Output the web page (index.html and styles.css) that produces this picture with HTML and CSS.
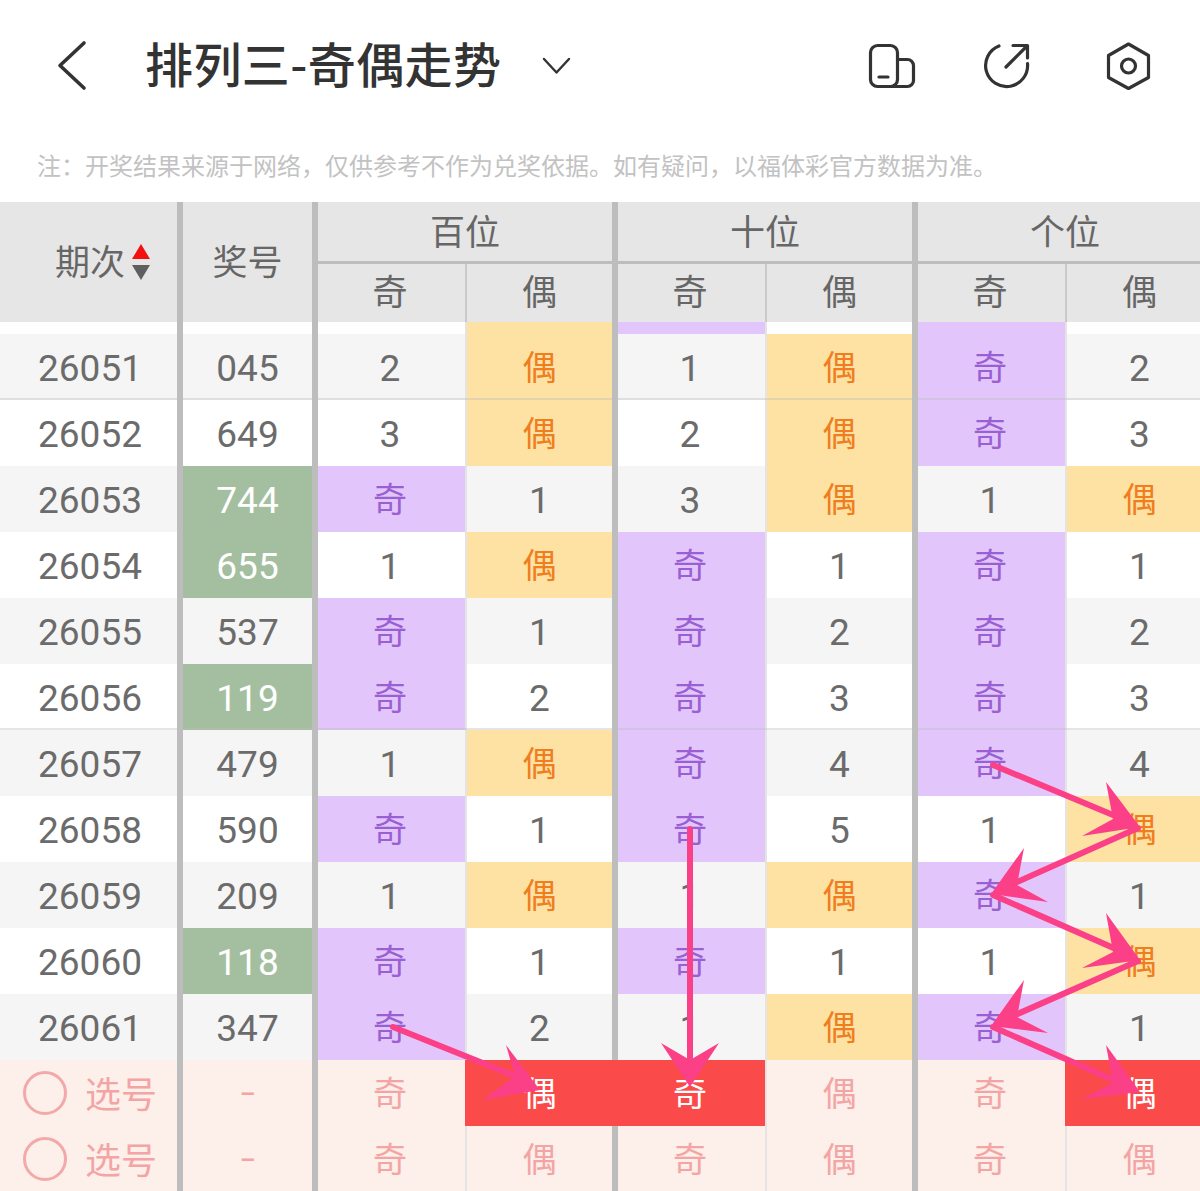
FILE: index.html
```html
<!DOCTYPE html>
<html lang="zh-CN">
<head>
<meta charset="utf-8">
<title>排列三-奇偶走势</title>
<link rel="stylesheet" href="styles.css">
</head>
<body>
<header class="topbar">
  <svg class="back" width="32" height="52" viewBox="0 0 32 52"><path d="M28 3 L4 25.5 L28 48"/></svg>
  <h1 class="title">排列三-奇偶走势</h1>
  <svg class="caret" width="30" height="18" viewBox="0 0 30 18"><path d="M2 2 L14.5 15.5 L27 2"/></svg>
  <svg class="ico ico-first" width="48" height="48" viewBox="0 0 48 48"><rect x="2.5" y="3.5" width="27" height="41" rx="7"/><path d="M29.5 17.5 H39.5 a6 6 0 0 1 6 6 V38.5 a6 6 0 0 1 -6 6 H23"/><path d="M11 35 H20"/></svg>
  <svg class="ico ico-second" width="48" height="48" viewBox="0 0 48 48"><path d="M16 4 A21 21 0 1 0 44.5 21.5"/><path d="M30 3.5 H44.5 V16"/><path d="M23 25 L43.5 4.5"/></svg>
  <svg class="ico ico-third" width="48" height="48" viewBox="0 0 48 48"><path d="M24.5 2 L44.5 13.5 V35.5 L24.5 46.5 L4.5 35.5 V13.5 Z"/><circle cx="24.5" cy="24" r="7"/></svg>
</header>
<p class="note">注&#xFF1A;开奖结果来源于网络&#xFF0C;仅供参考不作为兑奖依据。如有疑问&#xFF0C;以福体彩官方数据为准。</p>

<section class="table">
  <div class="thead">
    <div class="th-main th-period"><span class="th-label">期次</span><svg class="sort" width="20" height="38" viewBox="0 0 20 38"><polygon class="sort-up" points="10,0 19,15 1,15"/><polygon class="sort-down" points="1,21 19,21 10,36"/></svg></div>
    <div class="th-main"><span class="th-label">奖号</span></div>
    <div class="th-group"><div class="th-name">百位</div><div class="th-sub"><span>奇</span><span class="th-even">偶</span></div></div>
    <div class="th-group"><div class="th-name">十位</div><div class="th-sub"><span>奇</span><span class="th-even">偶</span></div></div>
    <div class="th-group"><div class="th-name">个位</div><div class="th-sub"><span>奇</span><span class="th-even">偶</span></div></div>
  </div>

  <div class="row row-stub">
    <div class="c c-main"></div><div class="c c-main"></div>
    <div class="c"></div><div class="c even yel"></div>
    <div class="c pur"></div><div class="c even"></div>
    <div class="c pur"></div><div class="c even"></div>
  </div>

  <div class="row alt sep"><div class="c c-main c-period">26051</div><div class="c c-main">045</div><div class="c">2</div><div class="c even yel">偶</div><div class="c">1</div><div class="c even yel">偶</div><div class="c pur">奇</div><div class="c even">2</div></div>
  <div class="row"><div class="c c-main c-period">26052</div><div class="c c-main">649</div><div class="c">3</div><div class="c even yel">偶</div><div class="c">2</div><div class="c even yel">偶</div><div class="c pur">奇</div><div class="c even">3</div></div>
  <div class="row alt"><div class="c c-main c-period">26053</div><div class="c c-main grn">744</div><div class="c pur">奇</div><div class="c even">1</div><div class="c">3</div><div class="c even yel">偶</div><div class="c">1</div><div class="c even yel">偶</div></div>
  <div class="row"><div class="c c-main c-period">26054</div><div class="c c-main grn">655</div><div class="c">1</div><div class="c even yel">偶</div><div class="c pur">奇</div><div class="c even">1</div><div class="c pur">奇</div><div class="c even">1</div></div>
  <div class="row alt"><div class="c c-main c-period">26055</div><div class="c c-main">537</div><div class="c pur">奇</div><div class="c even">1</div><div class="c pur">奇</div><div class="c even">2</div><div class="c pur">奇</div><div class="c even">2</div></div>
  <div class="row sep"><div class="c c-main c-period">26056</div><div class="c c-main grn">119</div><div class="c pur">奇</div><div class="c even">2</div><div class="c pur">奇</div><div class="c even">3</div><div class="c pur">奇</div><div class="c even">3</div></div>
  <div class="row alt"><div class="c c-main c-period">26057</div><div class="c c-main">479</div><div class="c">1</div><div class="c even yel">偶</div><div class="c pur">奇</div><div class="c even">4</div><div class="c pur">奇</div><div class="c even">4</div></div>
  <div class="row"><div class="c c-main c-period">26058</div><div class="c c-main">590</div><div class="c pur">奇</div><div class="c even">1</div><div class="c pur">奇</div><div class="c even">5</div><div class="c">1</div><div class="c even yel">偶</div></div>
  <div class="row alt"><div class="c c-main c-period">26059</div><div class="c c-main">209</div><div class="c">1</div><div class="c even yel">偶</div><div class="c">1</div><div class="c even yel">偶</div><div class="c pur">奇</div><div class="c even">1</div></div>
  <div class="row"><div class="c c-main c-period">26060</div><div class="c c-main grn">118</div><div class="c pur">奇</div><div class="c even">1</div><div class="c pur">奇</div><div class="c even">1</div><div class="c">1</div><div class="c even yel">偶</div></div>
  <div class="row alt"><div class="c c-main c-period">26061</div><div class="c c-main">347</div><div class="c pur">奇</div><div class="c even">2</div><div class="c">1</div><div class="c even yel">偶</div><div class="c pur">奇</div><div class="c even">1</div></div>

  <div class="row pick"><div class="c c-main c-pick"><i class="radio"></i><span class="pick-label">选号</span></div><div class="c c-main"><span class="dash">-</span></div><div class="c">奇</div><div class="c even red">偶</div><div class="c red">奇</div><div class="c even">偶</div><div class="c">奇</div><div class="c even red">偶</div></div>
  <div class="row pick"><div class="c c-main c-pick"><i class="radio"></i><span class="pick-label">选号</span></div><div class="c c-main"><span class="dash">-</span></div><div class="c">奇</div><div class="c even">偶</div><div class="c">奇</div><div class="c even">偶</div><div class="c">奇</div><div class="c even">偶</div></div>
</section>

<svg class="arrows" width="1200" height="1191" viewBox="0 0 1200 1191">
  <g class="arrow"><path d="M993 765 L1125 820"/><polygon points="1140,827 1106,782 1113,819 1082,836"/></g>
  <g class="arrow"><path d="M1138 828 L1006 887"/><polygon points="991,894 1024,848 1017,885 1048,902"/></g>
  <g class="arrow"><path d="M993 895 L1125 953"/><polygon points="1140,960 1106,913 1113,952 1082,968"/></g>
  <g class="arrow"><path d="M1138 961 L1006 1019"/><polygon points="991,1026 1024,980 1017,1017 1048,1033"/></g>
  <g class="arrow"><path d="M993 1027 L1125 1085"/><polygon points="1140,1092 1106,1045 1113,1083 1082,1099"/></g>
  <g class="arrow"><path d="M393 1027 L525 1080"/><polygon points="540,1090 506,1045 515,1076 483,1100"/></g>
  <g class="arrow"><path d="M690 829 V1065"/><polygon points="690,1087 661,1043 690,1060 719,1043"/></g>
</svg>
</body>
</html>
```

FILE: styles.css
```css
* { box-sizing: border-box; }
html, body { margin: 0; padding: 0; height: 1191px; overflow: hidden; background: #fff; }
body {
  position: relative;
  font-family: Roboto, "Noto Sans CJK SC", sans-serif;
  color: #666;
}

.topbar {
  height: 132px;
  display: flex;
  align-items: center;
  padding: 0 48px 0 56px;
}
.topbar svg { fill: none; stroke: #333; stroke-linecap: round; stroke-linejoin: round; flex: none; }
.back { stroke-width: 3.6; }
.title {
  margin: 0 0 8px 57px;
  font: 500 48px/1 "Noto Sans CJK SC", sans-serif;
  letter-spacing: 0.4px;
  color: #333;
  white-space: nowrap;
}
.caret { stroke-width: 2.4; margin-left: 41px; }
.ico { stroke-width: 3.2; }
.ico-first { margin-left: auto; }
.ico-second { margin-left: 67px; }
.ico-third { margin-left: 73px; }

.note {
  margin: 0;
  height: 70px;
  padding-left: 37px;
  font: 400 24px/66px "Noto Sans CJK SC", sans-serif;
  color: #c2c2c2;
  white-space: nowrap;
}

.table { width: 1218px; }

.thead {
  display: grid;
  grid-template-columns: 183px 135px 300px 300px 300px;
  height: 120px;
  background: #e6e6e6;
  font: 400 35px "Noto Sans CJK SC", sans-serif;
}
.th-main {
  display: flex;
  align-items: center;
  justify-content: center;
  border-right: 6px solid #bdbdbd;
}
.th-label { padding-bottom: 6px; }
.th-period { padding-left: 29px; }
.sort { margin-left: 6px; }
.sort-up { fill: #f21010; }
.sort-down { fill: #5f5f5f; }
.th-group { border-right: 6px solid #bdbdbd; display: flex; flex-direction: column; }
.th-name {
  height: 62px;
  padding-bottom: 4px;
  border-bottom: 3px solid #bdbdbd;
  display: flex;
  align-items: center;
  justify-content: center;
}
.th-sub { flex: 1; display: grid; grid-template-columns: 147px 147px; }
.th-sub span { display: flex; align-items: center; justify-content: center; padding: 0 3px 8px 0; }
.th-sub .th-even { border-left: 2px solid #c9c9c9; padding-right: 0; }

.row {
  position: relative;
  display: grid;
  grid-template-columns: 183px 135px 147px 153px 147px 153px 147px 153px;
  height: 66px;
  background: #fff;
}
.row-stub { height: 12px; }
.alt { background: #f5f5f5; }
.sep::after {
  content: "";
  position: absolute;
  left: 0;
  right: 0;
  bottom: -1px;
  height: 3px;
  background: rgba(190, 190, 190, 0.4);
}

.c {
  display: flex;
  align-items: center;
  justify-content: center;
  padding: 2px 3px 0 0;
  font-size: 37px;
  font-weight: 400;
  font-family: Roboto, "Noto Sans CJK SC", sans-serif;
  color: #6b6b6b;
}
.c-main { border-right: 6px solid #bdbdbd; padding-right: 0; }
.c-period { padding-left: 3px; }
.even { border-left: 2px solid #e4e4e4; border-right: 6px solid #bdbdbd; padding-right: 0; }

.pur, .yel, .pick .c { font-size: 34px; padding-top: 0; padding-bottom: 3px; }
.pur { background: #e2c6fb; color: #9a5fd2; }
.yel { background: #fde2a3; color: #f07d1e; }
.grn { background: #a4bf9f; color: #fff; }

.pick { background: #fdefe9; }
.pick .c { color: #f3a5a5; }
.pick .red { background: #fa4a4a; color: #fff; border-color: #fa4a4a; }
.pick .c-pick { justify-content: flex-start; padding: 0 0 0 23px; gap: 18px; }
.pick-label { font-size: 36px; padding-bottom: 3px; }
.dash { display: inline-block; transform: scaleX(1.5); }
.radio {
  width: 44px;
  height: 44px;
  border: 3px solid #f3a9a9;
  border-radius: 50%;
}

.arrows { position: absolute; left: 0; top: 0; pointer-events: none; }
.arrow path { fill: none; stroke: #fb4088; stroke-width: 6; stroke-linecap: round; }
.arrow polygon { fill: #fb4088; }
```
